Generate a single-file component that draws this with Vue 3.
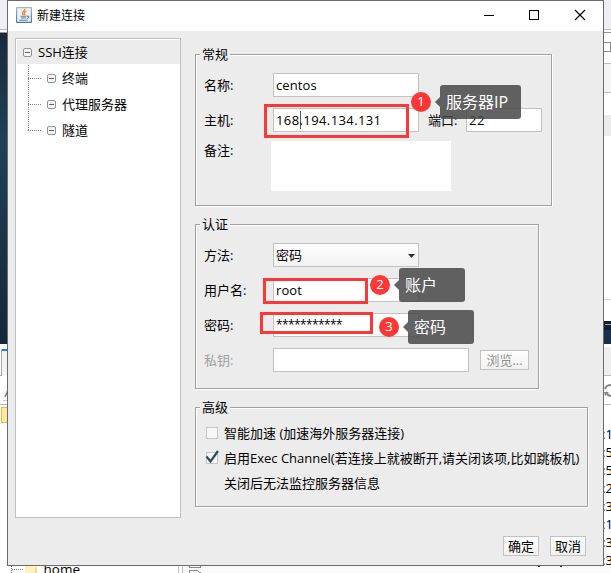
<script setup>
import { ref } from 'vue'

const treeItems = ['终端', '代理服务器', '隧道']
const logTails = [':1', ':5', ':5', ':2', ':3', ':1', ':3', ':3']

const name = ref('centos')
const port = ref('22')
const user = ref('root')
const mask = '*'.repeat(11)

const frames = ['host', 'user', 'pass']
const notes = [
  { id: 'host', no: 1, text: '服务器IP' },
  { id: 'user', no: 2, text: '账户' },
  { id: 'pass', no: 3, text: '密码' },
]
</script>

<template>
  <div class="screen">
    <svg class="backdrop" width="611" height="573" viewBox="0 0 611 573" shape-rendering="crispEdges">
      <rect width="611" height="573" fill="#fff" />
      <rect width="611" height="29" fill="#eeeff4" />
      <rect y="29" width="611" height="1" fill="#b8b8b8" />
      <rect y="32" width="611" height="1" fill="#969696" />
      <defs>
        <linearGradient id="wall" x1="0" y1="0" x2="0" y2="1">
          <stop offset="0" stop-color="#172a3c" />
          <stop offset=".35" stop-color="#214056" />
          <stop offset="1" stop-color="#14273a" />
        </linearGradient>
      </defs>
      <rect y="33" width="8" height="311" fill="url(#wall)" />
      <rect x="1" y="349" width="1" height="27" fill="#a8a8a8" />
      <rect y="375" width="2" height="1" fill="#a8a8a8" />
      <rect x="2" y="349" width="6" height="2" fill="#1583f7" />
      <rect x="2" y="351" width="6" height="24" fill="#f3f3f3" />
      <path d="M5 397l3-7" stroke="#777" stroke-width="1.5" shape-rendering="auto" />
      <rect x="3" y="400" width="5" height="1" fill="#c5c5c5" />
      <rect y="404" width="8" height="1" fill="#b8b8b8" />
      <rect x="1.5" y="407.5" width="10" height="15" fill="#ffe9a0" stroke="#e5bd45" />
      <path d="M11.500 566v7M12 569.500h12" stroke="#777" stroke-dasharray="1 1" />
      <path d="M25 566h12v7h-12z" fill="#fff0c0" />
      <path d="M35 573v-4l2-3v7z" fill="#f8dc83" />
      <path d="M178.500 566v7M182.500 566v7" stroke="#bcbcbc" />
      <rect x="183" y="566" width="428" height="7" fill="#fafafa" />
      <path d="M189.500 566v1.500h11v-1.500M189.500 573v-2.500h8l3 2.500" fill="none" stroke="#888" />
      <path d="M538 566h2M560 566h2" stroke="#333" />
      <rect x="604" y="33" width="7" height="30" fill="#fff" />
      <path d="M604 42.500h6.500v9h-6.500" fill="none" stroke="#8c8c8c" />
      <rect x="604" y="63" width="7" height="30" fill="#f4f4f4" />
      <path d="M604 63.500h7M604 92.500h7" stroke="#bdbdbd" />
      <rect x="604" y="115" width="7" height="21" fill="#ececec" />
      <rect x="604" y="299" width="7" height="1" fill="#d5d5d5" />
      <rect x="604" y="321" width="7" height="23" fill="#1a304a" />
      <rect x="604" y="321" width="7" height="9" fill="#102033" />
      <rect x="605" y="324" width="6" height="1" fill="#9aa8b5" />
      <rect x="604" y="347" width="7" height="28" fill="#efefef" />
      <rect x="604" y="375" width="7" height="1" fill="#bdbdbd" />
      <g shape-rendering="auto" fill="none" stroke="#888" stroke-width="2">
        <path d="M605 389q1-4 6-4M606 392q2 4 5 4" />
        <path d="M604 392h5l-4 4z" fill="#888" stroke="none" />
      </g>
      <rect x="604" y="404" width="7" height="1" fill="#bdbdbd" />
      <text class="home" x="43.500" y="574">home</text>
    </svg>
    <div class="logs">
      <span v-for="(tail, i) in logTails" :key="i">{{ tail }}</span>
    </div>

    <div class="dialog">
      <header class="titlebar">
        <svg class="java" width="16" height="16" viewBox="0 0 16 16">
          <defs>
            <linearGradient id="tile" x1="0" y1="0" x2="0" y2="1">
              <stop offset="0" stop-color="#a3b9cb" />
              <stop offset="1" stop-color="#4d7396" />
            </linearGradient>
          </defs>
          <rect width="16" height="16" rx="1" fill="url(#tile)" />
          <rect x="1.200" y="1.200" width="13.600" height="13.600" fill="#edf1f4" />
          <path d="M8.800 1.800c1 2-3.600 3-2.200 5.200l1 1.200M10.300 4.200c-2 .8-2.600 1.800-1.600 2.800.4.500 0 1-.3 1.300" fill="none" stroke="#ee8a2e" stroke-width="1.300" />
          <path d="M4.500 9.200h6M5 11h5.200M3.200 13.200h8.600M11 9.200c2.800-.6 2.300 2-.2 2.300" fill="none" stroke="#5582a5" stroke-width="1.100" />
        </svg>
        <span class="title">新建连接</span>
        <svg class="controls" width="100" height="12" viewBox="0 0 100 12" fill="none" stroke="#000">
          <path d="M0 6.500h10M45.500 1.500h9v9h-9z" shape-rendering="crispEdges" />
          <path d="M91 1l10 10M101 1l-10 10" stroke-width="1.100" />
        </svg>
      </header>

      <main class="body">
        <aside class="tree">
          <div class="root-item">
            <i class="toggle"></i><span>SSH连接</span>
          </div>
          <div class="branch">
            <div v-for="item in treeItems" :key="item" class="leaf">
              <i class="dots"></i><i class="toggle"></i><span>{{ item }}</span>
            </div>
          </div>
        </aside>

        <div class="forms">
          <section class="group general">
            <h2>常规</h2>
            <div class="rows">
              <div class="row"><label>名称:</label><div class="field">{{ name }}</div></div>
              <div class="row">
                <label>主机:</label>
                <div class="field num">168<i class="caret"></i>.194.134.131</div>
                <label class="port-label">端口:</label>
                <div class="field port">{{ port }}</div>
              </div>
              <div class="row memo-row"><label>备注:</label><div class="memo"></div></div>
            </div>
          </section>

          <section class="group auth">
            <h2>认证</h2>
            <div class="rows">
              <div class="row">
                <label>方法:</label>
                <div class="field select">密码
                  <svg width="7" height="4" viewBox="0 0 7 4"><path d="M0 0h7L3.500 4z" fill="#333" /></svg>
                </div>
              </div>
              <div class="row"><label>用户名:</label><div class="field">{{ user }}</div></div>
              <div class="row"><label>密码:</label><div class="field mask">{{ mask }}</div></div>
              <div class="row">
                <label class="muted">私钥:</label><div class="field key"></div>
                <button class="btn browse">浏览...</button>
              </div>
            </div>
          </section>

          <section class="group advanced">
            <h2>高级</h2>
            <div class="option"><i class="check"></i><span>智能加速 (加速海外服务器连接)</span></div>
            <div class="option">
              <i class="check on">
                <svg width="14" height="14" viewBox="0 0 14 14"><path d="M1.500 6.500l4 5L13 1" fill="none" stroke="#2b4860" stroke-width="2.200" /></svg>
              </i>
              <span>启用Exec Channel(若连接上就被断开,请关闭该项,比如跳板机)</span>
            </div>
            <div class="option hint"><span>关闭后无法监控服务器信息</span></div>
          </section>

          <footer class="actions">
            <button class="btn">确定</button>
            <button class="btn">取消</button>
          </footer>
        </div>
      </main>
    </div>

    <div v-for="f in frames" :key="f" class="frame" :class="'frame-' + f"></div>
    <div v-for="n in notes" :key="n.id" class="note" :class="'note-' + n.id">
      <span class="badge">{{ n.no }}</span>
      <i class="arrow"></i>
      <span class="tip">{{ n.text }}</span>
    </div>
  </div>
</template>

<style>
body { margin: 0; overflow: hidden; }
</style>

<style scoped>
* { box-sizing: border-box; }
.screen {
  position: relative;
  width: 611px;
  height: 573px;
  overflow: hidden;
  font: 13px/18px "Open Sans", "Noto Sans CJK SC", sans-serif;
  color: #000;
}
i { font-style: normal; display: block; flex: none; }
.backdrop { position: absolute; left: 0; top: 0; }
.home { font-size: 13.500px; }
.logs {
  position: absolute;
  left: 602px;
  top: 425px;
  display: flex;
  flex-direction: column;
  font-size: 13px;
}
.dialog {
  position: relative;
  width: 597px;
  height: 566px;
  margin-left: 7px;
  border: 1px solid #6b6b6b;
  background: #ececec;
}
.titlebar {
  display: flex;
  align-items: center;
  height: 30px;
  padding: 0 19px 2px 8px;
  background: #fff;
  font-size: 12px;
}
.title { margin: 1px 0 0 5px; }
.controls { margin-left: auto; overflow: visible; }
.body { display: flex; padding: 7px 0 0 7px; }
.tree {
  width: 166px;
  height: 480px;
  padding: 1px 0 0 1px;
  border: 1px solid #c0c0c0;
  background: #fff;
}
.root-item {
  display: flex;
  align-items: center;
  height: 24px;
  margin-bottom: 1px;
  padding-left: 6px;
  background: #ececec;
}
.root-item span { margin-top: -1px; }
.toggle {
  position: relative;
  width: 9px;
  height: 9px;
  border: 1px solid #939393;
  border-radius: 2px;
  background: #f6f6f6;
}
.toggle::after {
  content: "";
  display: block;
  margin: 3px 1px 0;
  height: 1px;
  background: #666;
}
.root-item .toggle { margin-right: 6px; }
.branch {
  display: flex;
  flex-direction: column;
  margin-left: 11px;
  background: repeating-linear-gradient(#808080 0 1px, transparent 1px 2px) 0 0 / 1px 66px no-repeat;
}
.leaf { display: flex; align-items: center; height: 26px; }
.dots {
  width: 13px;
  height: 1px;
  margin-right: 6px;
  background: repeating-linear-gradient(90deg, #808080 0 1px, transparent 1px 2px);
}
.leaf .toggle { margin-right: 6px; }
.forms { width: 393px; margin: 16px 0 0 14px; }
.group {
  margin-bottom: 18px;
  border: 1px solid #a0a0a0;
  box-shadow: 1px 1px 0 #fff, inset 1px 1px 0 #fff;
}
.general { width: 357px; height: 152px; }
.auth { width: 344px; height: 165px; }
.advanced { width: 393px; height: 100px; margin-bottom: 29px; }
h2 {
  width: 30px;
  height: 18px;
  margin: -9px 0 0 4px;
  padding-left: 2px;
  background: #ececec;
  font-size: 13px;
  font-weight: 400;
  line-height: 16px;
}
.rows { display: flex; flex-direction: column; gap: 11px; padding: 9px 0 0 8px; }
.row { display: flex; align-items: center; height: 24px; white-space: nowrap; }
label { width: 69px; flex: none; }
.field {
  display: flex;
  align-items: center;
  width: 146px;
  height: 24px;
  padding: 0 2px;
  border: 1px solid #c2c2c2;
  background: #fff;
  letter-spacing: .1px;
}
.num { letter-spacing: .400px; }
.caret { width: 1px; height: 18px; margin-right: -1px; background: #555; }
.port-label { width: 38px; margin-left: 9px; }
.port { width: 76px; letter-spacing: .5px; }
.memo-row { height: 50px; margin-top: -2px; align-items: flex-start; }
.memo-row label { width: 67px; }
.memo { width: 180px; height: 50px; background: #fff; }
.select {
  justify-content: space-between;
  background: linear-gradient(#fff, #f1f1f1);
}
.select svg { margin: 2px 1px 0 0; }
.mask { font-size: 12px; letter-spacing: -.600px; }
.key { width: 196px; }
.muted { color: #a0a0a0; }
.btn {
  width: 36px;
  height: 20px;
  padding: 0;
  border: 1px solid #c2c2c2;
  background: linear-gradient(#fff, #f1f1f1);
  color: #000;
  font: inherit;
  line-height: 17px;
  white-space: nowrap;
}
.browse { width: 49px; margin-left: 11px; color: #909090; }
.option { display: flex; align-items: center; height: 25px; padding-left: 10px; white-space: nowrap; }
h2 + .option { margin-top: 3px; }
.check {
  width: 12px;
  height: 12px;
  margin-right: 6px;
  border: 1px solid #c6c6c6;
  background: #f7f7f7;
}
.check svg { display: block; margin: -3px 0 0 -2px; }
.hint { padding-left: 28px; }
.actions { display: flex; justify-content: flex-end; gap: 11px; padding-right: 2px; }
.frame { position: absolute; border: 3px solid #fb3838; }
.frame-host { left: 264px; top: 104px; width: 145px; height: 34px; }
.frame-user { left: 263px; top: 278px; width: 105px; height: 26px; }
.frame-pass { left: 260px; top: 312px; width: 113px; height: 22px; }
.note { position: absolute; display: flex; align-items: center; height: 34px; }
.note-host { left: 411px; top: 85px; }
.note-user { left: 370px; top: 268px; }
.note-pass { left: 379px; top: 310px; }
.badge {
  width: 20px;
  height: 20px;
  border-radius: 50%;
  background: #fb3838;
  color: #fff;
  font-size: 13px;
  line-height: 19px;
  text-align: center;
}
.arrow {
  margin-left: 4px;
  border: 5px solid transparent;
  border-left: 0;
  border-right-color: rgba(72, 72, 72, .85);
}
.tip {
  width: 66px;
  height: 34px;
  padding-left: 6px;
  border-radius: 3px;
  background: rgba(72, 72, 72, .85);
  color: #fff;
  font-size: 16px;
  line-height: 34px;
  white-space: nowrap;
}
.note-host .tip { width: 81px; }
</style>
